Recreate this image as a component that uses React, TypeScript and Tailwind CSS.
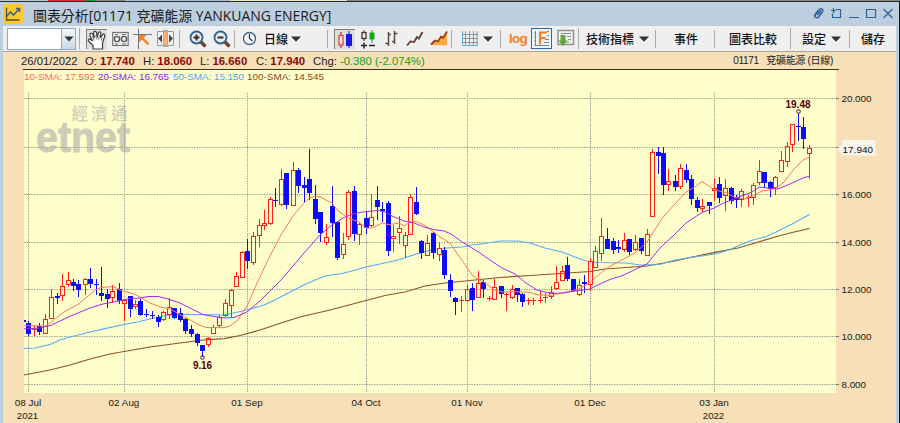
import React from "react";

const FONT = "font-['Liberation_Sans','Noto_Sans_CJK_TC',sans-serif]";

type Candle = [number, number, number, number, number, 0 | 1];

// x, high, body top, body bottom, low, rising (1 = hollow red, 0 = solid blue)
const candles: Candle[] = [
  [28.5, 320.7, 323, 334, 336, 0], [34, 325.3, 328.7, 330.3, 336, 1], [39.7, 323.3, 325.7, 332.3, 335.3, 0],
  [45, 314, 318.7, 333.3, 333.3, 1], [51.3, 289.3, 297.3, 318.3, 318.3, 1], [57, 293.3, 295.7, 297.7, 304, 0],
  [62.3, 274, 286.3, 294.7, 300.7, 1], [68, 271.7, 280.3, 284.3, 286.7, 1], [73.5, 279.3, 282.3, 285.7, 291.3, 0],
  [78.8, 280.3, 283.7, 289.7, 296.7, 0], [85.5, 278.3, 279.3, 284.3, 294.7, 1], [90.7, 268, 279.3, 283.7, 287.7, 0],
  [96.3, 279.3, 283.7, 284.7, 295.3, 0], [101.7, 267.3, 292.7, 296, 301, 0], [107, 289.3, 294.3, 298.7, 307.7, 0],
  [112.7, 285.3, 291.3, 296.7, 302.7, 1], [119, 283.3, 289.3, 300.7, 304, 0], [124.5, 299, 300, 303.3, 321.3, 1],
  [130, 296.3, 296.3, 308.7, 317.3, 0], [135.3, 300, 303.7, 305.7, 309.3, 1], [140.7, 298.7, 301, 315.3, 316, 0],
  [146.7, 309.3, 313.5, 314.7, 317.3, 0], [152, 311, 315.3, 316.3, 318.7, 0], [158, 315.3, 317.3, 321.7, 327, 0],
  [163.5, 311, 312.3, 318.7, 320.7, 1], [169.3, 298.3, 307.3, 314.3, 318.7, 1], [174.7, 308.3, 308.3, 317.7, 318.7, 0],
  [180, 308, 313, 319.7, 322, 0], [185.7, 317.7, 319.3, 330.7, 334.3, 0], [191.7, 325.3, 329, 333.7, 336.7, 0],
  [197.3, 333.3, 333.7, 343, 345.7, 0], [202.7, 345, 345, 350.7, 356.7, 0], [208.3, 337.3, 337.7, 344, 346.7, 1],
  [213.7, 325, 327.3, 333.3, 333.3, 1], [219.3, 315, 317, 325.3, 327, 1], [225.7, 299, 303.3, 315.3, 316.7, 1],
  [231, 289.3, 290.3, 305.3, 317.3, 1], [236.7, 272.3, 276.3, 286.3, 286.3, 1], [242.3, 250.7, 252.3, 277.3, 278, 1],
  [247.7, 239, 251, 261.3, 268.7, 0], [253, 231.7, 235.7, 262.3, 264.7, 1], [259.3, 219.3, 225.3, 235.3, 246.7, 1],
  [264.7, 210.3, 223.3, 224.5, 230.3, 1], [270.3, 197, 199.3, 223.3, 225.3, 1], [275.7, 188, 200, 201.3, 206.7, 0],
  [281.3, 168.7, 179.3, 204.3, 205.7, 1], [286.7, 173.3, 173.3, 204.7, 208.7, 0], [293.3, 162.3, 170.3, 204.7, 205.7, 1],
  [298.3, 168, 170.3, 185.7, 192.7, 0], [304.3, 177, 185, 187.7, 202, 0], [309.7, 148.7, 179.3, 192.7, 200.3, 0],
  [315, 185, 199, 218.7, 224, 0], [320.3, 212.3, 212.3, 233, 242, 0], [326.7, 224, 237.3, 242.3, 245, 1],
  [332.3, 185.7, 206, 223.3, 236.7, 0], [337.7, 221.7, 222.3, 257.7, 260.3, 0], [343.3, 232.7, 243.7, 253.7, 258.7, 1],
  [348.7, 189.7, 192.3, 236.3, 240, 1], [354.3, 186, 191.3, 233.7, 241.3, 0], [359.7, 221.7, 224.3, 233.7, 245, 1],
  [366, 212.3, 217.7, 227.7, 233.7, 0], [371.3, 194, 216.7, 225.3, 227, 1], [377, 186, 200, 206.7, 220.3, 0],
  [382.3, 201.7, 209, 211, 222, 0], [388, 201.3, 203.3, 251.3, 256, 0], [393.3, 225, 236.3, 238.3, 251.7, 1],
  [399.3, 216, 228.3, 232.3, 244, 1], [405.3, 231.7, 235.3, 245.3, 258, 1], [410.3, 194, 197.3, 234.3, 234.3, 1],
  [416.3, 186.7, 202.3, 214, 215, 0], [421.7, 239.7, 240.7, 253, 258.7, 0], [427.3, 235.3, 242.7, 254.7, 256, 1],
  [433.3, 232.3, 233.3, 253, 258.7, 0], [439, 242.3, 247.7, 253.7, 260.7, 1], [444.3, 247.3, 250, 274.7, 278.7, 0],
  [450, 274.3, 280, 290.7, 296.7, 0], [455.3, 297, 298.3, 301.7, 315.3, 0], [461, 296, 300.2, 301, 312.3, 1],
  [467.3, 285, 289.3, 299.7, 302, 1], [472.7, 282.7, 288.3, 299.7, 310.7, 0], [478.3, 271, 283.3, 297.3, 297.3, 1],
  [483.7, 280.3, 282.3, 288.7, 298.3, 0], [489.3, 296, 297.7, 299, 301, 1], [494.7, 278.7, 287.3, 299.3, 299.3, 1],
  [501, 286, 286.3, 293.7, 298.3, 0], [506.3, 293.3, 293.7, 295, 310.7, 1], [512, 285, 288.7, 297.3, 298.7, 1],
  [517.7, 288.3, 288.3, 294.7, 301.7, 0], [522.7, 293, 294.3, 301.7, 307, 0], [528.3, 297.7, 300.2, 301, 304.7, 1],
  [533.7, 297.7, 300.2, 301, 304.7, 1], [540, 291.3, 300.2, 301, 303.3, 1], [545.7, 293, 297.3, 298, 303.3, 1],
  [551.3, 286.3, 292.3, 295.7, 298.7, 1], [556.7, 265.7, 282.3, 288.3, 290.3, 1], [562.3, 266.3, 271.3, 280.3, 281.3, 1],
  [567.3, 257.3, 265.3, 279.3, 281.3, 0], [573.7, 279.3, 279.3, 291, 292, 0], [579.3, 279.3, 284.7, 294.3, 296.3, 1],
  [584.7, 274.7, 282, 283.7, 293, 0], [590.3, 258.3, 261.3, 284.3, 291.3, 1], [595.7, 246.3, 251.3, 267.3, 267.3, 1],
  [601.3, 218, 235.7, 252.7, 260.7, 1], [607.7, 228.3, 239, 249.3, 249.3, 0], [613.3, 238.3, 241, 249.7, 253.7, 0],
  [618.7, 239.7, 247, 249, 252.7, 0], [624.3, 233.3, 240.3, 249.3, 252.3, 1], [629.7, 238.7, 239.3, 252.3, 254.7, 0],
  [635, 235, 242.3, 248.7, 251.3, 1], [641.3, 238.3, 238.3, 251.3, 253.7, 0], [647, 228.7, 234.3, 254.7, 254.7, 1],
  [652.3, 149.3, 152.3, 216.3, 216.3, 1], [658, 146.7, 151.7, 155.7, 173.7, 0], [663.3, 147, 153.3, 184.7, 195, 0],
  [668.7, 168.7, 181.3, 184.3, 190.7, 1], [675.3, 175, 180.7, 186.7, 191, 0], [680.7, 164, 168.3, 186.3, 188.7, 1],
  [686.3, 164, 170.3, 179.7, 183.3, 0], [691.3, 175, 179, 198.7, 204.7, 0], [697, 197.3, 199.7, 207.7, 212.3, 0],
  [702.3, 198.7, 205.7, 207.7, 212.3, 1], [709, 202.3, 202.3, 206.3, 213.7, 0], [714.3, 178, 188.3, 190.3, 200.7, 1],
  [719.7, 176.7, 184.3, 197.7, 203, 0], [725.3, 178.7, 188.3, 195.3, 211, 1], [731, 187.3, 187.7, 201.3, 203.7, 0],
  [736.3, 195, 197.3, 199.7, 208, 0], [741.7, 189, 191.3, 199.3, 206.7, 1], [748.3, 195, 197.3, 198, 206.7, 1],
  [753.7, 183, 184.7, 197.3, 204.7, 1], [759, 160.3, 171.3, 182.3, 185, 1], [764.7, 172.3, 172.3, 183, 188.3, 0],
  [770, 181.3, 182.3, 189, 196.7, 0], [775.3, 176, 177.3, 187.3, 195.3, 1], [781.7, 151.3, 160.3, 170.7, 170.7, 1],
  [787.3, 142.3, 146.3, 160.7, 167, 1], [792.7, 124.3, 124.3, 144.3, 152, 1], [798.3, 112.7, 126, 127, 141, 0],
  [803.7, 116.7, 127, 139.3, 148.7, 0], [809.3, 144.7, 148.3, 153.3, 179.3, 1],
];

const sma10 =
  "24,325.7 46,326 51,322 57,317 64,312 79,303.7 90,294.5 96,289.5 101,287.5 113,286.5 120,290 127,292 134,294 140,297 150,303 160,307 170,309 181,315 190,320 199,325 206,327.5 224,327.7 230,326 238,320 248,304 258,281 270,256 281,235 293,216 304,203 310,197.5 315,196.5 320,196.5 326,200 332,203 338,211 348,218 359,222 366,228 372,228 382,223 389,224.7 399,223 404,226 410,222 416,221.5 424,225 430,229 440,237 450,243 456,252 466,266 472,275 478,279 484,282 494,290 503,292 517,291.7 529,292.3 539,295 551,295.3 557,294 575,290 583,287 589,283 600,274 607,268 618,262 635,253 647,242 663,217 686,192 695,187 702,181.5 714,189.5 727,193 734,197 744,199 753,196 762,191 770,190 776,188 784,182 794,169 803,160 809.5,157";
const sma20 =
  "24,329 40,328 52,325 62,320 73,315 90,308 103,304 118,301 130,298.5 141,298 148,296.5 158,296.5 168,299 180,303 192,309 203,314.5 214,316.5 224,318 234,317.5 247,312 260,301 281,280 304,253 320,235 332,225 344,217.5 353,214 362,212 378,210.5 385,212 392,216 404,221 414,223 424,227 433,229.5 444,231 452,234.5 462,242 472,248 480,253 490,260 502,268 515,274 526,283 537,290 545,292 553,293.5 563,293 575,291 590,289 600,284 610,279.5 624,275 636,269 647,264 660,248 674,235 686,223 702,212.5 714,208 725,202.5 738,197.5 752,192 759,187 767,188 778,189 790,184 803,178 809.5,176";
const sma50 =
  "24,348.5 35,348 50,344.5 60,340 72,336.5 90,332 105,328.7 124,324.5 137,322 150,319 165,315.5 180,314.5 200,314.5 224,315 236,312.5 252,308.5 264,305 275,300 290,292 304,285 315,280 327,275.5 340,274 352,271 366,267 380,264 400,259.5 410,256 425,251.5 440,248.5 462,247 472,245 485,243.5 500,241 518,241 530,243 545,248 562,252 575,257 586,261 597,262.5 627,263 640,265 660,264.5 675,260 690,257.5 705,255.5 718,253.5 730,249.5 740,245 751,240.5 765,237 776,232 792,224 809.5,214.5";
const sma100 =
  "24,375 50,370 70,365 90,359 110,354 124,351.5 150,347 180,343 203,340 224,338.7 240,335.5 260,330 281,323 300,317 330,310 366,300.5 385,295.5 405,292 425,286 445,283 475,280 500,277.5 530,275.5 560,273.5 590,271.5 605,269 647,266 675,261 690,257.5 715,252.3 738,248 750,244.5 775,237 790,233 809.5,228.5";

const yTicks: [number, string][] = [
  [98.5, "20.000"], [194.5, "16.000"], [242.5, "14.000"], [289.5, "12.000"], [336.5, "10.000"], [384.5, "8.000"],
];
const gridY = [98.5, 147.5, 194.5, 242.5, 289.5, 336.5, 384.5];
const xTicks: [number, string][] = [
  [28.5, "08 Jul"], [124.5, "02 Aug"], [247.5, "01 Sep"], [366.5, "04 Oct"], [467.5, "01 Nov"], [590.5, "01 Dec"], [714.5, "03 Jan"],
];

function CandleMark({ c }: { c: Candle }) {
  const [x, hi, top, bottom, lo, up] = c;
  const cx = Math.floor(x) + 0.5;
  const t = Math.round(top);
  const b = Math.round(bottom);
  if (up) {
    const flat = b - t < 2;
    return (
      <g stroke="#ff2018" strokeWidth="1" fill="none">
        <path d={`M${cx} ${Math.round(hi)}V${t}M${cx} ${b}V${Math.round(lo)}`} />
        {flat ? <path d={`M${cx - 2.5} ${t + 0.5}h5`} /> : <rect x={cx - 2} y={t + 0.5} width="4" height={b - t} />}
      </g>
    );
  }
  return (
    <g fill="#0a0aff">
      <rect x={cx - 0.5} y={Math.round(hi)} width="1" height={Math.round(lo) - Math.round(hi)} />
      <rect x={cx - 2.5} y={t} width="5" height={Math.max(1, b - t)} />
    </g>
  );
}

function Chart() {
  return (
    <svg className="block shrink-0" width="893" height="354" viewBox="3 69 893 354" fontFamily="Liberation Sans, sans-serif" fontSize="9.9">
      <rect x="24" y="69" width="812" height="324" fill="#ffffcc" />
      <rect x="23" y="69" width="816" height="1" fill="#3c3522" />
      <g fill="#cdcdb7" fontWeight="700">
        <text x="71.5" y="119.5" fontSize="16.5" fontFamily="Noto Sans CJK TC, sans-serif" fontWeight="500" textLength="56">經濟通</text>
        <text x="36" y="152" fontSize="43" textLength="94" lengthAdjust="spacingAndGlyphs" stroke="#cdcdb7" strokeWidth="1" strokeLinejoin="round">etnet</text>
      </g>
      <g stroke="#a3a397" strokeDasharray="1.5 1">
        {gridY.map((y) => <path key={y} d={`M24 ${y}H836`} />)}
        {xTicks.map(([x]) => <path key={x} d={`M${x} 93V393`} />)}
      </g>
      <g stroke="#77735f">{gridY.map((y) => <path key={y} d={`M836 ${y}h3`} />)}</g>
      <g fill="none" strokeWidth="1.2">
        <polyline points={sma100} stroke="#8b5420" />
        <polyline points={sma50} stroke="#58acf2" />
      </g>
      <g shapeRendering="crispEdges">
        <rect x="24" y="320" width="2" height="2" fill="#0a0aff" />
        {candles.map((c) => <CandleMark key={c[0]} c={c} />)}
      </g>
      <g fill="none">
        <polyline points={sma10} stroke="#ff7858" />
        <polyline points={sma20} stroke="#a628f0" />
      </g>
      <g fill="none" stroke="#5a1010">
        <circle cx="798.5" cy="111.5" r="1.8" />
        <circle cx="202.5" cy="357.5" r="1.8" />
      </g>
      <g fill="#520000" fontWeight="700" fontSize="10">
        <text x="785.5" y="108" textLength="25">19.48</text>
        <text x="193" y="368.5" textLength="19">9.16</text>
      </g>
      <g>
        <text x="24" y="80" fill="#ff6450" textLength="71">10-SMA: 17.592</text>
        <text x="98" y="80" fill="#a010f0" textLength="71">20-SMA: 16.765</text>
        <text x="173" y="80" fill="#4aa2ee" textLength="71">50-SMA: 15.150</text>
        <text x="247" y="80" fill="#8b4a1c" textLength="77">100-SMA: 14.545</text>
      </g>
      <g fill="#1c1912">
        {yTicks.map(([y, s]) => <text key={s} x="841.5" y={y + 3.5} textLength={s === "8.000" ? 24.5 : 30}>{s}</text>)}
        {xTicks.map(([x, s]) => <text key={s} x={x - 0.5} y="405.5" textAnchor="middle">{s}</text>)}
        <text x="27.5" y="418.5" textAnchor="middle" fontSize="9.6">2021</text>
        <text x="713.5" y="418.5" textAnchor="middle" fontSize="9.6">2022</text>
      </g>
      <path d="M837 149l5-5V140h33.500v15.500H842v-2z" fill="#f9f4ec" />
      <text x="842.5" y="153" fill="#111" textLength="30.5">17.940</text>
    </svg>
  );
}

const Sep = ({ className }: { className: string }) => <div className={`w-px shrink-0 bg-[#a9a9a9] ${className}`} />;
const Caret = ({ className }: { className: string }) => (
  <svg className={`shrink-0 ${className}`} width="10" height="6" viewBox="0 0 10 6"><path d="M0 .5h10L5 5.8z" fill="#333" /></svg>
);
const Label = ({ className, children }: { className: string; children: React.ReactNode }) => (
  <span className={`shrink-0 whitespace-nowrap font-['Noto_Sans_CJK_TC',sans-serif] text-[12px] font-medium leading-[18px] text-[#111] ${className}`}>{children}</span>
);
const Magnifier = ({ plus, className }: { plus?: boolean; className: string }) => (
  <svg className={`shrink-0 ${className}`} width="18" height="18" viewBox="0 0 18 18" fill="none">
    <path d="M11.5 11.500l4 4" stroke="#6b3f24" strokeWidth="3.2" strokeLinecap="round" />
    <circle cx="7.5" cy="7.500" r="6" fill="#e4ecf4" stroke="#35618f" strokeWidth="1.800" />
    <path d={plus ? "M4.500 7.500h6M7.500 4.500v6" : "M4.500 7.500h6"} stroke="#3d281c" strokeWidth="2" />
  </svg>
);

function Toolbar() {
  return (
    <div className="flex h-[25px] w-[893px] shrink-0 items-center bg-[#efefef]">
      <div className="ml-[4px] flex h-[22px] w-[69px] shrink-0 border border-[#8fa9c0] bg-white">
        <div className="flex-1" />
        <div className="flex w-[14px] items-center justify-center border-l border-[#8fa9c0] bg-gradient-to-b from-[#f3f6f9] to-[#c9d9e7]">
          <svg width="10" height="6" viewBox="0 0 10 6"><path d="M.5 .5h9L5 5.500z" fill="#333" /></svg>
        </div>
      </div>
      <Sep className="ml-[3px] h-[21px]" />
      <div className="ml-[6px] h-[20px] w-[21px] shrink-0 border-l border-t border-[#808080] bg-[#dedede]">
        <svg width="20" height="20" viewBox="0 0 20 20">
          <path d="M6 19v-3.500L1.500 11c-1-1.400.8-2.700 2.200-1.500L5.500 11 3 5.500C2.300 3.400 4.700 2.400 5.700 4.300L7.400 8 6.500 3.200C6.300 1 9 .7 9.500 2.700L10.300 7.500l.9-4.500c.5-1.900 2.800-1.400 2.600.5L13.500 8l1.800-3c1-1.500 2.900-.5 2.400 1.200L15.500 13v6z" fill="#fff" stroke="#3c3c3c" strokeWidth="1.200" />
          <path d="M5.500 6l1.700 4.500M8.700 5l.8 4.500M12.200 5.500l-.6 4.500M15 8l-1 3" stroke="#555" strokeWidth=".8" />
        </svg>
      </div>
      <svg className="ml-[5px] shrink-0" width="17" height="18" viewBox="0 0 17 18" fill="none" stroke="#777">
        <rect x=".7" y="2.500" width="15.500" height="13" strokeWidth="1.200" />
        <circle cx="5" cy="9" r="2.600" stroke="#555" strokeWidth="1.400" /><circle cx="12" cy="9" r="2.600" stroke="#555" strokeWidth="1.400" />
        <path d="M3 4.500h3M10 4.500h4M3 14h3M10 14h4" />
      </svg>
      <svg className="ml-[4px] shrink-0" width="19" height="20" viewBox="0 0 19 20" fill="none">
        <path d="M0 5.500h19M5.500 0v20" stroke="#777" />
        <path d="M8 8l7.500 7.500" stroke="#ff7d22" strokeWidth="2.400" /><path d="M6 6h7.500L6 13.500z" fill="#ff7d22" />
      </svg>
      <svg className="ml-[5px] shrink-0" width="17" height="18" viewBox="0 0 17 18">
        <path d="M.5 1.500h16v14H.500z" fill="#f2f2f2" stroke="#999" />
        <path d="M6 0h5v17H6z" fill="#aaa" /><path d="M7 2h3v13H7z" fill="#ffb170" />
        <path d="M1 8.500l4-4v8zM16 8.500l-4-4v8z" fill="#444" />
      </svg>
      <Sep className="ml-[5px] h-[18px]" />
      <Magnifier plus className="ml-[9px]" />
      <Magnifier className="ml-[6px]" />
      <Sep className="ml-[3px] h-[18px]" />
      <svg className="ml-[7px] shrink-0" width="15" height="16" viewBox="0 0 15 16" fill="none">
        <circle cx="7.500" cy="7.500" r="6" fill="#fafcff" stroke="#3f6287" strokeWidth="1.400" />
        <path d="M7.500 3v4.500l3 2.500" stroke="#333" strokeWidth="1.300" />
      </svg>
      <Label className="ml-[7px] w-[24px]">日線</Label>
      <Caret className="ml-[3px]" />
      <Sep className="ml-[26px] h-[18px]" />
      <div className="ml-[6px] h-[20px] w-[21px] shrink-0 border-l border-t border-[#808080] bg-[#dedede]">
        <svg width="20" height="20" viewBox="0 0 20 20">
          <path d="M6 2v4m0 9v3" stroke="#c4343c" strokeWidth="1.300" /><rect x="4" y="5.500" width="4" height="9.500" fill="#ffe4e0" stroke="#e03a3a" strokeWidth="1.200" />
          <path d="M14 1v17" stroke="#1717ff" /><path d="M11 4h6v12h-6z" fill="#1717ee" />
        </svg>
      </div>
      <svg className="ml-[6px] shrink-0" width="16" height="20" viewBox="0 0 16 20" fill="none">
        <path d="M3 1v2m0 7v2" stroke="#4b3028" /><rect x="1" y="3.500" width="4" height="6" stroke="#4b3028" strokeWidth="1.300" />
        <path d="M11 1v13" stroke="#14a214" /><path d="M8.500 3.500h5v7h-5z" fill="#10aa10" />
        <path d="M0 16.500h6M3 13.500v6M8 16.500h6" stroke="#222" strokeWidth="1.400" />
      </svg>
      <svg className="ml-[8px] shrink-0" width="14" height="18" viewBox="0 0 14 18" fill="none" stroke="#5c4a3c" strokeWidth="1.500">
        <path d="M3.500 2v14M.5 13.500h3M3.500 4.500h2.500M9.500 1v13M7 11.500h2.500M9.500 3.500h3" />
      </svg>
      <svg className="ml-[7px] shrink-0" width="18" height="18" viewBox="0 0 18 18" fill="none">
        <path d="M1 15.500l3.500-4 3.500.5 3-5 2 1.500 3.500-6.500" stroke="#5c3c2e" strokeWidth="1.700" />
      </svg>
      <svg className="ml-[6px] shrink-0" width="19" height="18" viewBox="0 0 19 18" fill="none">
        <path d="M1 15l4-4 3 1 3-5 2 1.500 4-6.500v13.500z" fill="#ffab45" /><path d="M1 14.500l4-4 3 1 3-5 2 1.500 4-6.500" stroke="#9b3d16" strokeWidth="1.800" />
      </svg>
      <Sep className="ml-[2px] h-[18px]" />
      <svg className="ml-[9px] shrink-0" width="18" height="18" viewBox="0 0 18 18" fill="none" stroke="#8994a0">
        <path d="M1 4.500h16M1 8.500h16M1 12.500h16M4.500 1v15M8.500 1v15M12.500 1v15M16 1v15" /><path d="M1.500 1v14.500h15" stroke="#67abd4" />
      </svg>
      <Caret className="ml-[4px]" />
      <Sep className="ml-[7px] h-[18px]" />
      <span className="ml-[8px] w-[19px] shrink-0 text-[13.5px] font-bold leading-[18px] tracking-[-0.7px] text-[#ff7a1e]">log</span>
      <div className="ml-[3px] h-[21px] w-[21px] shrink-0 border border-[#286ba8] bg-[#edf5fc]">
        <svg width="19" height="19" viewBox="0 0 19 19" fill="none">
          <path d="M3.500 2v14.500M2.500 16.500H17M15 2.500h2M15 6.500h2M13 10.500h4M12 13.500h5M2 4h2M2 8h2M2 12h2" stroke="#78828c" />
          <path d="M8 15.500V3.500h7M8 9h5.500" stroke="#ff7925" strokeWidth="2.200" />
        </svg>
      </div>
      <svg className="ml-[5px] shrink-0" width="18" height="19" viewBox="0 0 18 19" fill="none">
        <path d="M1 1.500h15.500v14H1z" fill="#f5f5f5" stroke="#909090" strokeWidth="1.500" />
        <path d="M4 4.500h10M10 7.500h4M11 10.500h3M10 13h2" stroke="#8b8b8b" />
        <path d="M3.500 6h5v5.500H11L6 17 1 11.500h2.500z" fill="#62a93a" />
      </svg>
      <Sep className="ml-[3px] h-[21px]" />
      <Label className="ml-[7px] w-[49px]">技術指標</Label>
      <Caret className="ml-[4px]" />
      <Sep className="ml-[6px] h-[18px]" />
      <Label className="ml-[18px] w-[24px]">事件</Label>
      <Sep className="ml-[16px] h-[18px]" />
      <Label className="ml-[14px] w-[49px]">圖表比較</Label>
      <Sep className="ml-[12px] h-[21px]" />
      <Label className="ml-[11px] w-[24px]">設定</Label>
      <Caret className="ml-[5px]" />
      <Sep className="ml-[8px] h-[18px]" />
      <Label className="ml-[11px] w-[24px]">儲存</Label>
    </div>
  );
}

function TitleBar() {
  return (
    <div className="flex h-[24px] w-[893px] shrink-0 items-center">
      <svg className="shrink-0" width="20" height="20" viewBox="0 0 20 20" fill="none">
        <rect width="20" height="20" rx="3" fill="#ffc928" />
        <path d="M3.500 3.500v12.500h13" stroke="#4a5440" strokeWidth="1.300" /><path d="M3.500 12.500l4-4.500 3 3 6-6.500M13 4.500h3.500V8" stroke="#37649a" strokeWidth="1.600" />
      </svg>
      <span className="ml-[10px] mt-[4px] w-[690px] shrink-0 whitespace-nowrap font-['Open_Sans','Noto_Sans_CJK_TC',sans-serif] text-[14px] leading-[20px] tracking-[-0.07px] text-[#1b1b1b]">
        圖表分析[01171 兗礦能源 YANKUANG ENERGY]
      </span>
      <svg className="ml-[86px] shrink-0" width="84" height="16" viewBox="809 8 84 16" fill="none" stroke="#2e6399" strokeWidth="1.200">
        <path d="M815 17.500l4.500-6c1.500-1.800 4.500 0 3 2.200l-3.500 4.800c-2 2.500-5.500.5-4-2l3.500-4.500M817.500 17l3.500-4.500" strokeWidth="1.500" />
        <path d="M836 11.500h4.500v8h-8v-4M831 12.500h5M833.500 10v5" />
        <path d="M849 19.500h10M866.500 11.500h9v8h-9zM883.500 11l9 9M892.500 11l-9 9" />
      </svg>
    </div>
  );
}

function Quote({ k, v, className }: { k: string; v: string; className: string }) {
  return (
    <div className={`flex shrink-0 whitespace-nowrap ${className}`}>
      <span>{k}</span>
      <span className="ml-[3px] text-[11.4px] font-bold text-[#8c0a0a]">{v}</span>
    </div>
  );
}

export default function App() {
  return (
    <div className={`flex h-[423px] w-[900px] flex-col overflow-hidden bg-[#bdcedf] ${FONT}`}>
      <div className="flex h-px shrink-0">
        <div className="w-[48px] bg-[#b9c8cc]" /><div className="w-[37px] bg-[#e02c2c]" /><div className="w-[10px] bg-[#139a20]" />
        <div className="w-[30px] bg-[#8a8a8a]" /><div className="w-[105px] bg-[#aac5cf]" /><div className="w-[117px] bg-[#e8ebc4]" /><div className="flex-1 bg-[#8a857a]" />
      </div>
      <div className="h-px shrink-0 bg-[#262d32]" />
      <div className="flex flex-1">
        <div className="ml-[3px] flex w-[893px] flex-col">
          <TitleBar />
          <Toolbar />
          <div className="flex h-[18px] shrink-0 items-center border-t border-[#a9a39a] bg-[#f7dfb7] text-[11.3px] leading-[16px] text-[#1c1c1c]">
            <span className="ml-[18px] w-[57px] shrink-0 whitespace-nowrap">26/01/2022</span>
            <Quote className="ml-[7px] w-[58px]" k="O:" v="17.740" />
            <Quote className="w-[57px]" k="H:" v="18.060" />
            <Quote className="w-[56px]" k="L:" v="16.660" />
            <Quote className="w-[57px]" k="C:" v="17.940" />
            <span className="shrink-0">Chg:</span>
            <span className="ml-[3px] whitespace-nowrap text-[#14a014]">-0.380 (-2.074%)</span>
            <span className="ml-auto whitespace-pre pr-[63px] text-[10px] tracking-[-0.3px]">01171   兗礦能源 (日線)</span>
          </div>
          <div className="flex-1 bg-[#f7dfb7]"><Chart /></div>
        </div>
        <div className="ml-auto w-px bg-[#14181c]" />
      </div>
    </div>
  );
}
